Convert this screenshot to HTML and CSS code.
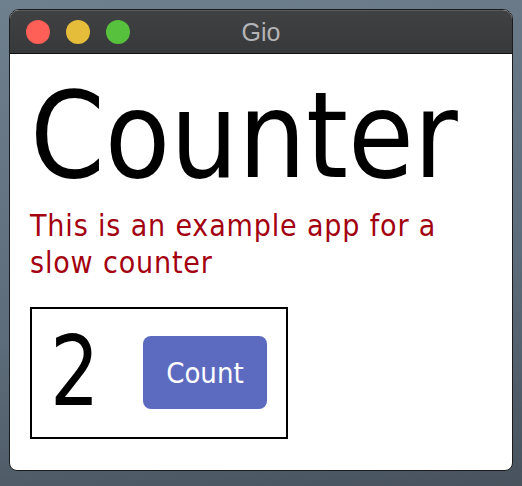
FILE: index.html
```html
<!DOCTYPE html>
<html>
<head>
<meta charset="utf-8">
<link rel="stylesheet" href="styles.css">
</head>
<body>
<div class="window">
  <div class="titlebar">
    <div class="lights">
      <span class="light red"></span>
      <span class="light yellow"></span>
      <span class="light green"></span>
    </div>
    <div class="title">Gio</div>
  </div>
  <div class="content">
    <div class="heading">Counter</div>
    <div class="subtitle">This is an example app for a slow counter</div>
    <div class="box">
      <div class="value">2</div>
      <div class="button">Count</div>
    </div>
  </div>
</div>
</body>
</html>
```
FILE: styles.css
```css
html, body {
  margin: 0;
  padding: 0;
  width: 522px;
  height: 486px;
  overflow: hidden;
}
body {
  background: linear-gradient(170deg, #6e7f8e 0%, #5d6c7a 60%, #47525d 100%);
}
.window {
  margin: 9px 0 0 9px;
  width: 502px;
  height: 460px;
  border: 1px solid #1c1c1e;
  border-radius: 10px 10px 8px 8px;
  overflow: hidden;
  display: flex;
  flex-direction: column;
  background: #fff;
}
.titlebar {
  position: relative;
  flex: none;
  background: linear-gradient(#404143, #38393b);
  border-top: 1px solid #5a5b5d;
  border-bottom: 1px solid #111;
  box-sizing: border-box;
  height: 44px;
  display: flex;
  align-items: center;
}
.lights {
  display: flex;
  gap: 16px;
  padding-left: 16px;
}
.light {
  width: 24px;
  height: 24px;
  border-radius: 50%;
  display: block;
}
.red { background: #fe5f57; }
.yellow { background: #e6bd3b; }
.green { background: #57c03d; }
.title {
  position: absolute;
  left: 0;
  right: 0;
  top: 7px;
  text-align: center;
  font-family: "Liberation Sans", Arial, sans-serif;
  font-size: 25px;
  color: #b4b4b6;
}
.content {
  flex: 1;
  padding: 0 20px;
  font-family: "DejaVu Sans Condensed", "DejaVu Sans", sans-serif;
  font-stretch: condensed;
  display: flex;
  flex-direction: column;
  align-items: flex-start;
}
.heading {
  font-size: 119px;
  line-height: 1;
  margin-top: 23px;
  color: #000;
}
.subtitle {
  font-size: 30px;
  line-height: 37px;
  letter-spacing: 0.85px;
  color: #a30010;
  width: 460px;
  margin-top: 11px;
}
.box {
  margin-top: 26px;
  border: 2px solid #000;
  display: flex;
  align-items: center;
  padding: 27px 19px 28px 18px;
  gap: 38px;
}
.value {
  font-size: 96px;
  line-height: 73px;
  color: #000;
  transform: scaleX(0.9);
  transform-origin: left center;
}
.button {
  width: 124px;
  height: 73px;
  border-radius: 8px;
  background: #5c6bc0;
  color: #fff;
  font-size: 29px;
  display: flex;
  align-items: center;
  justify-content: center;
}
```
